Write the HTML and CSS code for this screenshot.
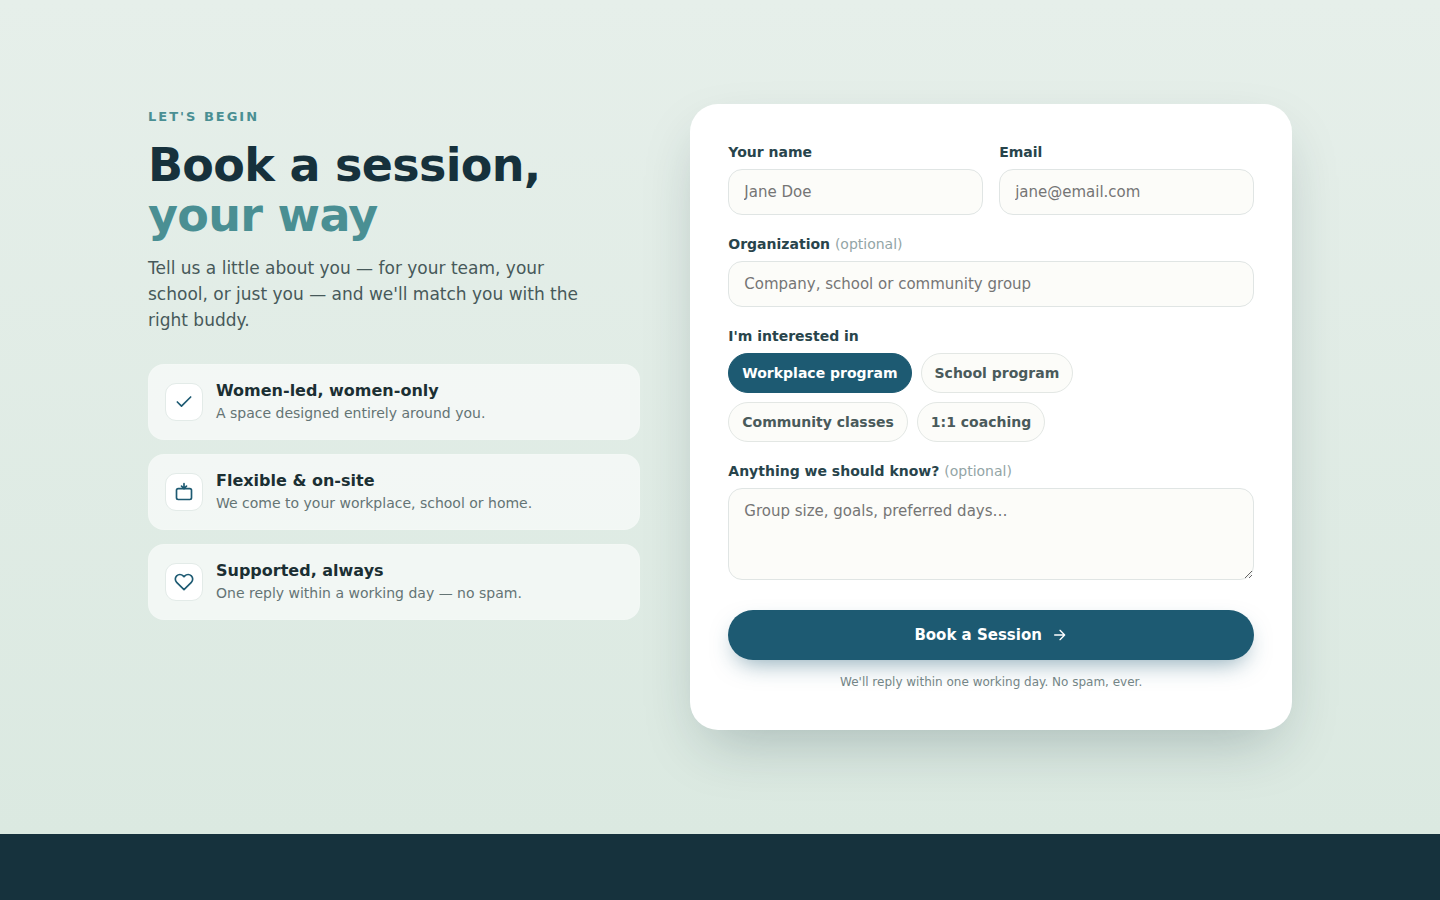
FILE: index.html
```html
<!DOCTYPE html>
<html lang="en">
<head>
<meta charset="utf-8">
<meta name="viewport" content="width=device-width, initial-scale=1">
<title>Book a session</title>
<link rel="stylesheet" href="styles.css">
</head>
<body>
<main class="booking">
  <div class="container">
    <section class="intro">
      <p class="eyebrow">Let's begin</p>
      <h1 class="title">Book a session,<br><span class="title-accent">your way</span></h1>
      <p class="lead">Tell us a little about you — for your team, your school, or just you — and we'll match you with the right buddy.</p>
      <ul class="perks">
        <li class="perk">
          <span class="perk-icon"><svg viewBox="0 0 24 24" aria-hidden="true"><path d="M20 6 9 17l-5-5"/></svg></span>
          <div><h2 class="perk-title">Women-led, women-only</h2><p class="perk-text">A space designed entirely around you.</p></div>
        </li>
        <li class="perk">
          <span class="perk-icon"><svg viewBox="0 0 24 24" aria-hidden="true"><rect x="3" y="8" width="18" height="13" rx="2"/><path d="M12 2v6M9 5l3 3 3-3"/></svg></span>
          <div><h2 class="perk-title">Flexible &amp; on-site</h2><p class="perk-text">We come to your workplace, school or home.</p></div>
        </li>
        <li class="perk">
          <span class="perk-icon"><svg viewBox="0 0 24 24" aria-hidden="true"><path d="M20.8 4.6a5.5 5.5 0 0 0-7.8 0l-1 1.1-1-1.1a5.5 5.5 0 0 0-7.8 7.8L12 21.2l8.8-8.8a5.5 5.5 0 0 0 0-7.8z"/></svg></span>
          <div><h2 class="perk-title">Supported, always</h2><p class="perk-text">One reply within a working day — no spam.</p></div>
        </li>
      </ul>
    </section>
    <form class="card">
      <div class="field-row">
        <div class="field"><label class="label" for="name">Your name</label><input class="control" id="name" type="text" placeholder="Jane Doe"></div>
        <div class="field"><label class="label" for="email">Email</label><input class="control" id="email" type="email" placeholder="jane@email.com"></div>
      </div>
      <div class="field"><label class="label" for="org">Organization <span class="optional">(optional)</span></label><input class="control" id="org" type="text" placeholder="Company, school or community group"></div>
      <div class="field" role="group" aria-labelledby="interest">
        <span class="label" id="interest">I'm interested in</span>
        <div class="chips">
          <button class="chip chip-active" type="button" aria-pressed="true">Workplace program</button>
          <button class="chip" type="button" aria-pressed="false">School program</button>
          <button class="chip" type="button" aria-pressed="false">Community classes</button>
          <button class="chip" type="button" aria-pressed="false">1:1 coaching</button>
        </div>
      </div>
      <div class="field"><label class="label" for="notes">Anything we should know? <span class="optional">(optional)</span></label><textarea class="control control-area" id="notes" placeholder="Group size, goals, preferred days…"></textarea></div>
      <button class="submit" type="submit">Book a Session <svg viewBox="0 0 24 24" aria-hidden="true"><path d="M4 12h15M12 5l7 7-7 7"/></svg></button>
      <p class="note">We'll reply within one working day. No spam, ever.</p>
    </form>
  </div>
</main>
<footer class="footer"></footer>
</body>
</html>
```
FILE: styles.css
```css
* { box-sizing: border-box; margin: 0; }

body {
  min-height: 100vh;
  display: flex;
  flex-direction: column;
  font-family: "DejaVu Sans", sans-serif;
  color: #16313c;
  background: #16323d;
}

.booking {
  padding: 104px 28px;
  background: linear-gradient(180deg, #e6efea, #dbe9e1);
}

.container {
  max-width: 1144px;
  margin: 0 auto;
  display: grid;
  grid-template-columns: 9fr 11fr;
  gap: 50px;
  align-items: start;
}

.eyebrow {
  font-size: 13px;
  line-height: 26px;
  font-weight: 700;
  letter-spacing: 2px;
  text-transform: uppercase;
  color: #4a8f93;
}

.title {
  margin-top: 10px;
  font-size: 46px;
  line-height: 50px;
  letter-spacing: -0.015em;
}

.title-accent { color: #4a8f93; }

.lead {
  margin-top: 15px;
  max-width: 440px;
  font-size: 17px;
  line-height: 26px;
  color: #47595a;
}

.perks {
  margin-top: 31px;
  padding: 0;
  list-style: none;
  display: grid;
  gap: 14px;
}

.perk {
  display: flex;
  align-items: center;
  gap: 13px;
  padding: 15px 16px;
  border: 1px solid rgba(255, 255, 255, 0.1);
  border-radius: 16px;
  background: rgba(255, 255, 255, 0.6);
}

.perk-icon {
  flex: none;
  display: grid;
  place-items: center;
  width: 38px;
  height: 38px;
  border: 1px solid #e3ebe8;
  border-radius: 11px;
  background: #fff;
}

.perk-icon svg {
  width: 20px;
  height: 20px;
  fill: none;
  stroke: #1d5a72;
  stroke-width: 2;
  stroke-linecap: round;
  stroke-linejoin: round;
}

.perk-title { font-size: 16px; line-height: 22px; color: #1b2f33; }
.perk-text { font-size: 14px; line-height: 22px; color: #647474; }

.card {
  padding: 38px;
  border-radius: 28px;
  background: #fff;
  box-shadow: 0 24px 60px -16px rgba(22, 49, 60, 0.28);
}

.field-row { display: grid; grid-template-columns: 1fr 1fr; gap: 16px; }
.field { margin-bottom: 19px; }

.label {
  display: block;
  margin-bottom: 6px;
  font-size: 14px;
  line-height: 21px;
  font-weight: 700;
  color: #28444b;
}

.optional { font-weight: 400; color: #93a5a6; }

.control {
  display: block;
  width: 100%;
  height: 46px;
  padding: 13px 15px;
  border: 1px solid #e0e5e4;
  border-radius: 14px;
  background: #fcfcf9;
  font-family: inherit;
  font-size: 15px;
  color: #16313c;
}

.control::placeholder { color: #757575; }
.control-area { height: 92px; resize: vertical; }
.chips { display: flex; flex-wrap: wrap; gap: 9px; }

.chip {
  height: 40px;
  padding: 0 13px;
  border: 1px solid #e3e7e4;
  border-radius: 20px;
  background: #fcfcf9;
  font: 700 14px "DejaVu Sans", sans-serif;
  color: #4a5a5b;
}

.chip-active { border-color: #1d5a72; background: #1d5a72; color: #fff; }

.submit {
  display: flex;
  align-items: center;
  justify-content: center;
  gap: 10px;
  width: 100%;
  height: 50px;
  margin-top: 30px;
  border: 0;
  border-radius: 25px;
  background: #1d5a72;
  box-shadow: 0 10px 24px -8px rgba(29, 90, 114, 0.55);
  font: 700 15px "DejaVu Sans", sans-serif;
  color: #fff;
}

.submit svg {
  width: 16px;
  height: 16px;
  fill: none;
  stroke: currentColor;
  stroke-width: 2;
  stroke-linecap: round;
  stroke-linejoin: round;
}

.note {
  margin-top: 12px;
  font-size: 12px;
  line-height: 20px;
  text-align: center;
  color: #748586;
}

.footer { flex: 1; min-height: 66px; background: #16323d; }

@media (max-width: 800px) {
  .container { grid-template-columns: 1fr; }
}
```
